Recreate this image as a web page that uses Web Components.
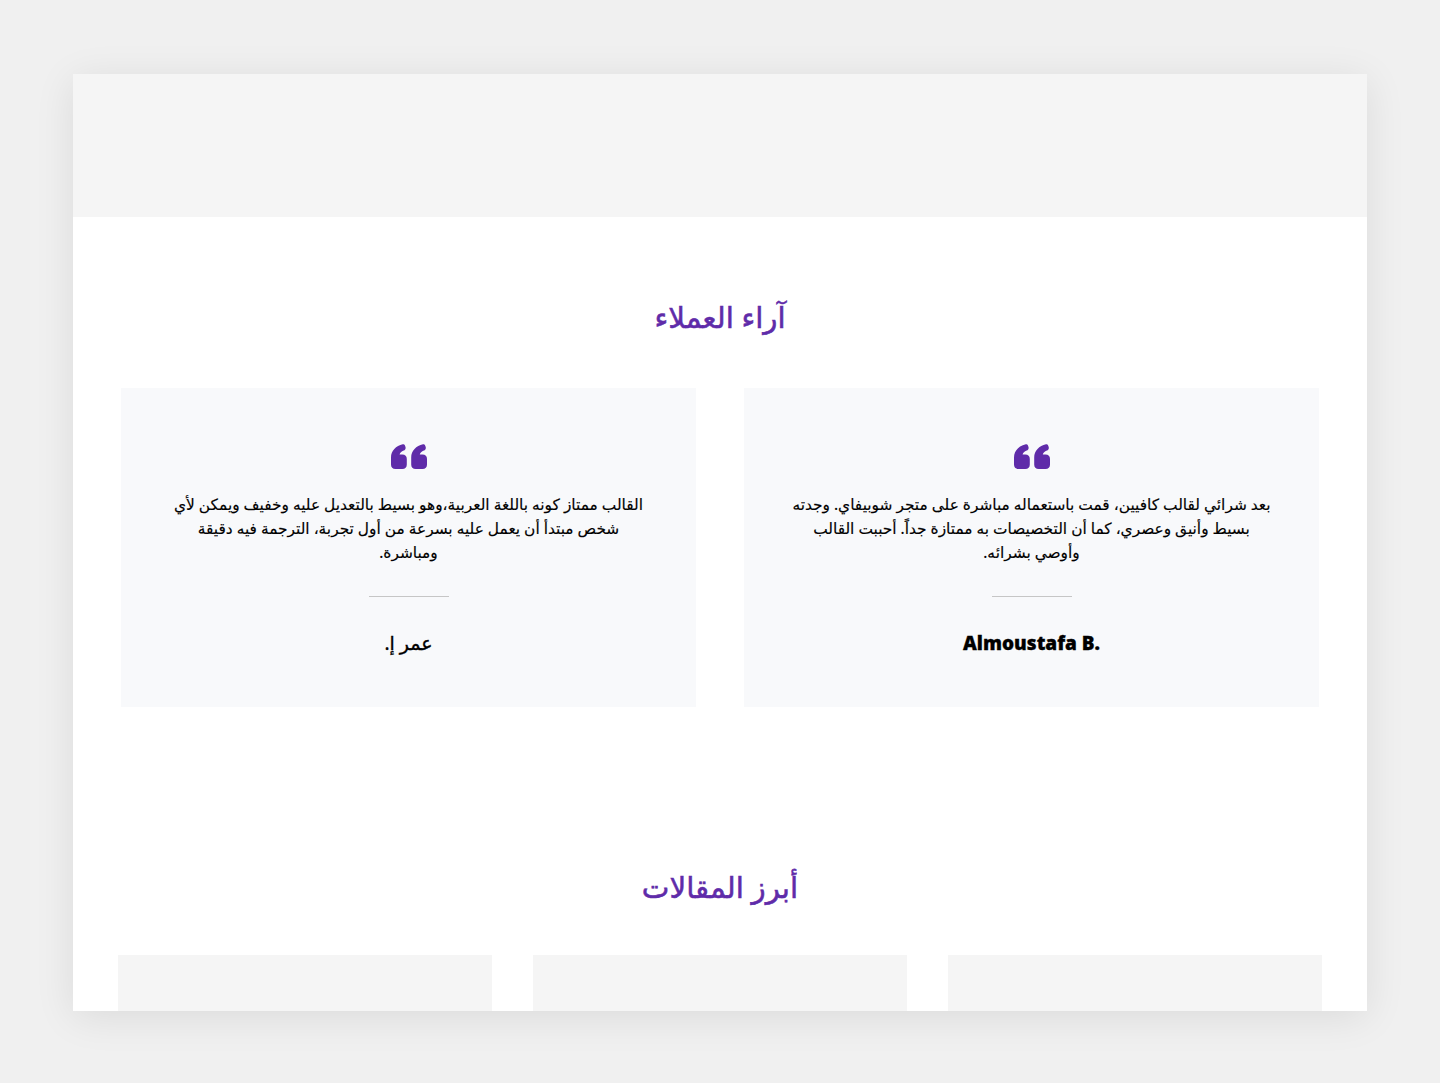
<!DOCTYPE html>
<html lang="ar" dir="rtl">
<head>
<meta charset="utf-8">
<title>آراء العملاء</title>
<style>
html,body{margin:0;padding:0;background:#f0f0f0;}
body{font-family:"Noto Sans","DejaVu Sans",sans-serif;height:1083px;overflow:hidden;box-sizing:border-box;padding:74px 73px 0;}
</style>
</head>
<body>
<preview-window>
  <placeholder-band></placeholder-band>
  <testimonials-section heading="آراء العملاء">
    <testimonial-card author="Almoustafa B." latin>بعد شرائي لقالب كافيين، قمت باستعماله مباشرة على متجر شوبيفاي. وجدته بسيط وأنيق وعصري، كما أن التخصيصات به ممتازة جداً. أحببت القالب وأوصي بشرائه.</testimonial-card>
    <testimonial-card author="عمر إ.">القالب ممتاز كونه باللغة العربية،وهو بسيط بالتعديل عليه وخفيف ويمكن لأي شخص مبتدأ أن يعمل عليه بسرعة من أول تجربة، الترجمة فيه دقيقة ومباشرة.</testimonial-card>
  </testimonials-section>
  <articles-section heading="أبرز المقالات"></articles-section>
</preview-window>
<script>
function define(name, html, init){
  customElements.define(name, class extends HTMLElement{
    constructor(){super();this.attachShadow({mode:"open"}).innerHTML=html;}
    connectedCallback(){if(init)init(this,this.shadowRoot);}
  });
}
const setHeading=(el,root)=>{root.querySelector("h2").textContent=el.getAttribute("heading");};
const headingCss=`h2{margin:0;text-align:center;color:#5f2ba9;font:400 29.300px/36px "Noto Sans","DejaVu Sans",sans-serif;-webkit-text-stroke:.55px #5f2ba9;}`;
const glyph="M11.800.3C5 1.800 0 6.800 0 13.500V20.500C0 23.400 1.600 25 4.500 25H11.300C14.200 25 15.800 23.400 15.800 20.500V15C15.800 12.100 14.200 10.500 11.300 10.500H8.600C9 8.800 10.400 7.500 12.700 6.600C14.300 6 14.900 4.700 14.500 3.100C14 .9 13.400-.1 11.800.3z";

define("preview-window",`<style>:host{display:block;width:1294px;height:937px;overflow:hidden;background:#fff;box-shadow:0 6px 38px rgba(0,0,0,.09);}</style><slot></slot>`);
define("placeholder-band",`<style>:host{display:block;height:143px;background:#f5f5f5;}</style>`);
define("testimonials-section",`<style>:host{display:block;padding:82px 48px 0;}
${headingCss}
.grid{display:grid;grid-template-columns:575px 575px;gap:48px;margin-top:53px;}</style>
<h2></h2><div class="grid"><slot></slot></div>`,setHeading);
define("testimonial-card",`<style>:host{display:flex;flex-direction:column;align-items:center;box-sizing:border-box;height:319px;padding:56px 48px 0;background:#f8f9fb;color:#000;}
svg{display:block;width:36px;height:25px;fill:#5f2ba9;}
p{margin:24px 0 0;width:100%;text-align:center;font:400 15.400px/24px "Noto Sans","DejaVu Sans",sans-serif;-webkit-text-stroke:.15px #000;}
hr{width:80px;height:1px;border:0;background:#c6c6c6;margin:31px 0 0;}
.a{margin-top:33px;font:400 19px/27px "Noto Sans","DejaVu Sans",sans-serif;-webkit-text-stroke:.35px #000;}
.a[dir=ltr]{font-weight:900;-webkit-text-stroke:.3px #000;}
</style>
<svg viewBox="0 0 36 25" aria-hidden="true"><path d="${glyph}"/><path transform="translate(20.200)" d="${glyph}"/></svg>
<p><slot></slot></p><hr><div class="a"></div>`,(el,root)=>{
  const a=root.querySelector(".a");a.textContent=el.getAttribute("author");
  if(el.hasAttribute("latin"))a.dir="ltr";
});
define("articles-section",`<style>:host{display:block;padding:162px 45px 0;}
${headingCss}
.grid{display:grid;grid-template-columns:repeat(3,374px);gap:41px;margin-top:50px;}
.grid div{height:200px;background:#f5f5f5;}</style>
<h2></h2><div class="grid"><div></div><div></div><div></div></div>`,setHeading);
</script>
</body>
</html>
